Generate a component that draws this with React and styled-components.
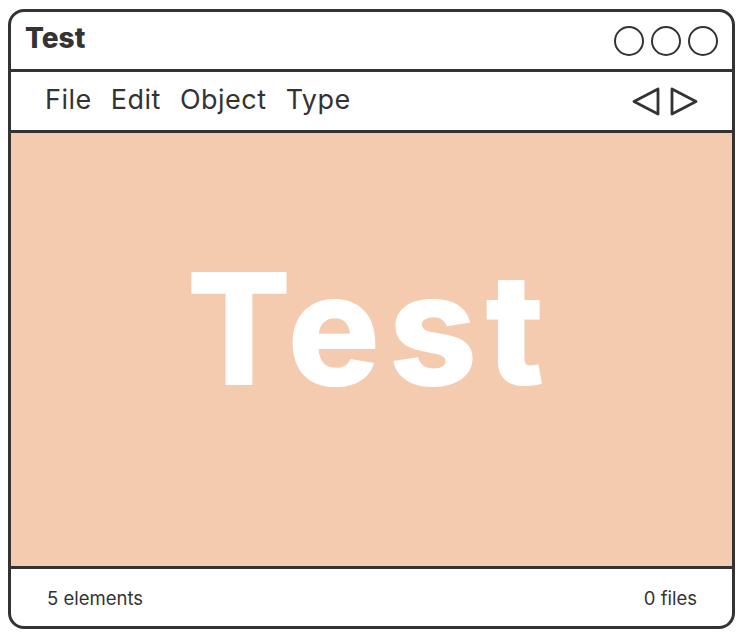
import React from 'react'
import styled, { createGlobalStyle } from 'styled-components'

const GlobalStyle = createGlobalStyle`
  html, body {
    margin: 0;
    padding: 0;
    background: #fff;
  }
  body {
    font-family: Inter, 'Noto Sans', sans-serif;
    color: #333;
  }
`

const Page = styled.div`
  padding: 9px 0 0 8px;
`

const Window = styled.div`
  box-sizing: border-box;
  width: 727px;
  height: 620px;
  border: 3px solid #333;
  border-radius: 16px;
  overflow: hidden;
  display: flex;
  flex-direction: column;
  background: #fff;
`

const TitleBar = styled.div`
  height: 57px;
  flex: none;
  display: flex;
  align-items: center;
  justify-content: space-between;
  padding: 0 14px 0 14px;
  border-bottom: 3px solid #333;
`

const Title = styled.h1`
  margin: 0;
  font-size: 28px;
  font-weight: 800;
  color: #333;
  padding-bottom: 6px;
`

const Dots = styled.div`
  display: flex;
  gap: 7px;
`

const Dot = styled.span`
  box-sizing: border-box;
  width: 30px;
  height: 30px;
  border-radius: 50%;
  border: 2.5px solid #333;
`

const MenuBar = styled.div`
  height: 58px;
  flex: none;
  display: flex;
  align-items: center;
  justify-content: space-between;
  padding: 0 33px 0 34px;
  border-bottom: 3px solid #333;
`

const Menu = styled.nav`
  display: flex;
  gap: 19px;
  padding-bottom: 3px;
`

const MenuItem = styled.span`
  font-size: 27px;
  font-weight: 400;
  letter-spacing: 0.5px;
  color: #333;
`

const Arrows = styled.div`
  display: flex;
  gap: 8px;
  align-items: center;
`

const Canvas = styled.main`
  flex: 1;
  background: #f5cbb0;
  display: flex;
  align-items: center;
  justify-content: center;
  border-bottom: 3px solid #333;
`

const BigText = styled.span`
  font-size: 155px;
  font-weight: 800;
  letter-spacing: 8px;
  color: #fff;
  margin: 0 4px 42px 0;
`

const Footer = styled.footer`
  flex: 1 0 auto;
  max-height: 57px;
  display: flex;
  align-items: center;
  justify-content: space-between;
  padding: 0 35px 0 36px;
  font-size: 18.5px;
  color: #333;
`

const Triangle = ({ dir }) => (
  <svg width='30' height='31' viewBox='0 0 30 31' fill='none'>
    <path
      d={dir === 'left' ? 'M27 3 L3 15.5 L27 28 Z' : 'M3 3 L27 15.5 L3 28 Z'}
      stroke='#333'
      strokeWidth='2.8'
      strokeLinejoin='round'
    />
  </svg>
)

export default function App () {
  return (
    <Page>
      <GlobalStyle />
      <Window>
        <TitleBar>
          <Title>Test</Title>
          <Dots>
            <Dot />
            <Dot />
            <Dot />
          </Dots>
        </TitleBar>
        <MenuBar>
          <Menu>
            <MenuItem>File</MenuItem>
            <MenuItem>Edit</MenuItem>
            <MenuItem>Object</MenuItem>
            <MenuItem>Type</MenuItem>
          </Menu>
          <Arrows>
            <Triangle dir='left' />
            <Triangle dir='right' />
          </Arrows>
        </MenuBar>
        <Canvas>
          <BigText>Test</BigText>
        </Canvas>
        <Footer>
          <span>5 elements</span>
          <span>0 files</span>
        </Footer>
      </Window>
    </Page>
  )
}
